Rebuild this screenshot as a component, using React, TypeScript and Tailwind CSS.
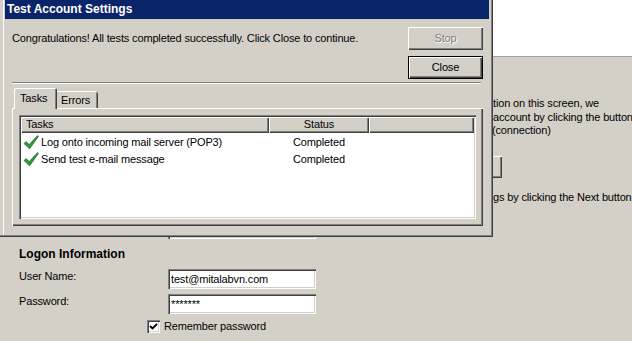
const sunken =
  "shadow-[inset_1px_1px_0_#808080,inset_2px_2px_0_#404040,inset_-1px_-1px_0_#ffffff,inset_-2px_-2px_0_#d4d0c8]";
const raised =
  "shadow-[inset_1px_1px_0_#ffffff,inset_-1px_-1px_0_#404040,inset_-2px_-2px_0_#808080]";

const CheckIcon = () => (
  <svg width="16" height="15" viewBox="0 0 16 15">
    <path
      d="M1 8.6 L3 6.6 L6.2 9.6 L14.6 0.6 L15.4 1.4 L6.6 13.8 Z"
      fill="#2f9a38"
      stroke="#16631f"
      strokeWidth="0.7"
      strokeLinejoin="round"
    />
  </svg>
);

const tasks = [
  { name: "Log onto incoming mail server (POP3)", status: "Completed" },
  { name: "Send test e-mail message", status: "Completed" },
];

const TestDialog = () => {
  return (
    <div className="absolute left-0 top-0 w-[493px] h-[237px] bg-[#d4d0c8] shadow-[inset_-1px_-1px_0_#404040,inset_-2px_-2px_0_#808080,inset_3px_0_0_#d4d0c8,inset_4px_0_0_#ffffff]">
      <div className="ml-[5px] w-[484px] h-[19px] bg-[#0a246a] pl-[2px] text-white font-bold text-[12px] leading-[19px] tracking-normal">
        Test Account Settings
      </div>
      <div className="pl-[12px] pr-[10px]">
        <div className="flex justify-between pt-[8px]">
          <p className="mt-[4px] leading-[14px]">
            Congratulations! All tests completed successfully. Click Close to
            continue.
          </p>
          <div className="flex flex-col gap-[6px]">
            <div
              className={`w-[75px] h-[23px] flex items-center justify-center text-[#808080] [text-shadow:1px_1px_0_#ffffff] ${raised}`}
            >
              Stop
            </div>
            <div className="w-[75px] h-[23px] flex items-center justify-center shadow-[inset_1px_1px_0_#000000,inset_-1px_-1px_0_#000000,inset_2px_2px_0_#ffffff,inset_-2px_-2px_0_#404040,inset_-3px_-3px_0_#808080]">
              Close
            </div>
          </div>
        </div>
        <div className="mt-[3px] mr-[2px] h-[2px] border-t border-b border-t-[#808080] border-b-white" />
        <div className="mt-[4px] h-[20px] flex items-end pl-[2px]">
          <div className="relative z-10 -mb-[1px] w-[43px] h-[21px] pl-[6px] pt-[3px] leading-[14px] bg-[#d4d0c8] rounded-t-[2px] shadow-[inset_1px_1px_0_#ffffff,inset_-1px_0_0_#404040,inset_-2px_0_0_#808080]">
            Tasks
          </div>
          <div className="w-[41px] h-[17px] pl-[4px] pt-[2px] leading-[14px] rounded-tr-[2px] shadow-[inset_0_1px_0_#ffffff,inset_-1px_0_0_#404040,inset_-2px_0_0_#808080]">
            Errors
          </div>
        </div>
        <div className={`h-[118px] p-[7px] ${raised}`}>
          <div className={`h-[104px] bg-white p-[2px] ${sunken}`}>
            <div className="flex h-[16px] leading-[15px]">
              <div className="w-[248px] pl-[5px] bg-[#d4d0c8] shadow-[inset_1px_1px_0_#ffffff,inset_-1px_-1px_0_#404040,inset_-2px_-2px_0_#808080]">
                Tasks
              </div>
              <div className="w-[100px] text-center bg-[#d4d0c8] shadow-[inset_1px_1px_0_#ffffff,inset_-1px_-1px_0_#404040,inset_-2px_-2px_0_#808080]">
                Status
              </div>
              <div className="flex-1 bg-[#d4d0c8] shadow-[inset_1px_1px_0_#ffffff,inset_-1px_-1px_0_#404040,inset_-2px_-2px_0_#808080]" />
            </div>
            <div className="pt-[1px]">
              {tasks.map((t) => (
                <div key={t.name} className="flex h-[17px] items-center">
                  <div className="w-[248px] flex items-center gap-[2px] pl-[2px]">
                    <CheckIcon />
                    <span>{t.name}</span>
                  </div>
                  <div className="w-[100px] text-center">{t.status}</div>
                </div>
              ))}
            </div>
          </div>
        </div>
      </div>
    </div>
  );
};

export default function App() {
  return (
    <div className="relative w-[632px] h-[341px] overflow-hidden bg-[#d4d0c8] font-['Liberation_Sans',Arial,sans-serif] text-[11px] tracking-[-0.15px] text-black">
      <div className="h-[57px] bg-white border-b border-[#a0a0a0]" />
      <div className="flex">
        <div className="w-[492px] pl-[19px] pt-[162px]">
          <div className="flex items-start">
            <span className="w-[149px] leading-[15px]">E-mail Address:</span>
            <div className={`w-[148px] h-[20px] bg-white ${sunken}`} />
          </div>
          <h3 className="mt-[8px] font-bold text-[12px] leading-[14px] tracking-normal">
            Logon Information
          </h3>
          <div className="mt-[8px] flex items-start">
            <span className="w-[149px] leading-[15px]">User Name:</span>
            <div
              className={`w-[148px] h-[20px] bg-white pl-[3px] leading-[20px] ${sunken}`}
            >
              test@mitalabvn.com
            </div>
          </div>
          <div className="mt-[5px] flex items-start">
            <span className="w-[149px] leading-[15px]">Password:</span>
            <div
              className={`w-[148px] h-[20px] bg-white pl-[3px] leading-[21px] ${sunken}`}
            >
              *******
            </div>
          </div>
          <div className="mt-[6px] flex items-center">
            <div
              className={`ml-[128px] w-[13px] h-[13px] bg-white flex items-center justify-center ${sunken}`}
            >
              <svg width="9" height="9" viewBox="0 0 9 9">
                <path
                  d="M1 4 L3.5 6.5 L8 2"
                  fill="none"
                  stroke="#000000"
                  strokeWidth="1.8"
                />
              </svg>
            </div>
            <span className="ml-[4px] leading-[13px]">Remember password</span>
          </div>
        </div>
        <div className="flex-1 pt-[40px] overflow-hidden whitespace-nowrap leading-[13.5px]">
          <p className="pl-[1px]">tion on this screen, we</p>
          <p className="pl-[1px]">account by clicking the button</p>
          <p>(connection)</p>
          <div className="mt-[18px] w-[10px] h-[22px] shadow-[inset_0_1px_0_#ffffff,inset_-1px_-1px_0_#404040,inset_-2px_-2px_0_#808080]" />
          <p className="mt-[13px] pl-[1px]">gs by clicking the Next button</p>
        </div>
      </div>
      <TestDialog />
    </div>
  );
}
